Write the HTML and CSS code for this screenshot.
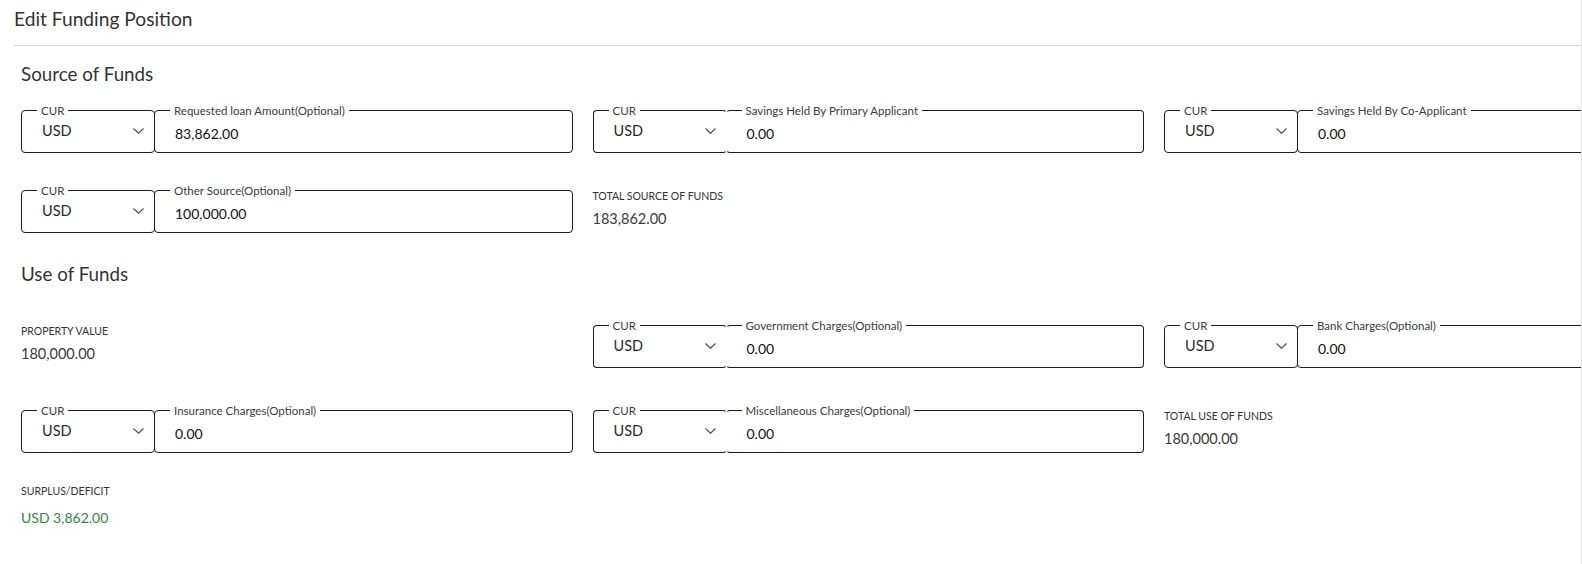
FILE: index.html
```html
<!DOCTYPE html>
<html lang="en">
<head>
<meta charset="utf-8">
<title>Edit Funding Position</title>
<link rel="stylesheet" href="styles.css">
</head>
<body>
<div class="page">
  <header class="page-head"><h1 class="page-title">Edit Funding Position</h1></header>

  <section class="section section-source">
    <h2 class="section-title">Source of Funds</h2>
    <div class="grid grid-source">
      <div class="money">
        <fieldset class="fs fs-cur"><legend>CUR</legend><div class="sel"><span>USD</span><svg class="chev" width="11" height="6" viewBox="0 0 11 6"><path d="M0.5 0.5 L5.5 5.3 L10.5 0.5" fill="none" stroke="#555" stroke-width="1.2"/></svg></div></fieldset>
        <fieldset class="fs fs-amt"><legend>Requested loan Amount(Optional)</legend><div class="inp">83,862.00</div></fieldset>
      </div>
      <div class="money open">
        <fieldset class="fs fs-cur"><legend>CUR</legend><div class="sel"><span>USD</span><svg class="chev" width="11" height="6" viewBox="0 0 11 6"><path d="M0.5 0.5 L5.5 5.3 L10.5 0.5" fill="none" stroke="#555" stroke-width="1.2"/></svg></div></fieldset>
        <fieldset class="fs fs-amt"><legend>Savings Held By Primary Applicant</legend><div class="inp">0.00</div></fieldset>
      </div>
      <div class="money">
        <fieldset class="fs fs-cur"><legend>CUR</legend><div class="sel"><span>USD</span><svg class="chev" width="11" height="6" viewBox="0 0 11 6"><path d="M0.5 0.5 L5.5 5.3 L10.5 0.5" fill="none" stroke="#555" stroke-width="1.2"/></svg></div></fieldset>
        <fieldset class="fs fs-amt"><legend>Savings Held By Co-Applicant</legend><div class="inp">0.00</div></fieldset>
      </div>
      <div class="money">
        <fieldset class="fs fs-cur"><legend>CUR</legend><div class="sel"><span>USD</span><svg class="chev" width="11" height="6" viewBox="0 0 11 6"><path d="M0.5 0.5 L5.5 5.3 L10.5 0.5" fill="none" stroke="#555" stroke-width="1.2"/></svg></div></fieldset>
        <fieldset class="fs fs-amt"><legend>Other Source(Optional)</legend><div class="inp">100,000.00</div></fieldset>
      </div>
      <div class="stat">
        <div class="stat-label">TOTAL SOURCE OF FUNDS</div>
        <div class="stat-value">183,862.00</div>
      </div>
    </div>
  </section>

  <section class="section section-use">
    <h2 class="section-title">Use of Funds</h2>
    <div class="grid grid-use">
      <div class="stat">
        <div class="stat-label">PROPERTY VALUE</div>
        <div class="stat-value">180,000.00</div>
      </div>
      <div class="money open">
        <fieldset class="fs fs-cur"><legend>CUR</legend><div class="sel"><span>USD</span><svg class="chev" width="11" height="6" viewBox="0 0 11 6"><path d="M0.5 0.5 L5.5 5.3 L10.5 0.5" fill="none" stroke="#555" stroke-width="1.2"/></svg></div></fieldset>
        <fieldset class="fs fs-amt"><legend>Government Charges(Optional)</legend><div class="inp">0.00</div></fieldset>
      </div>
      <div class="money">
        <fieldset class="fs fs-cur"><legend>CUR</legend><div class="sel"><span>USD</span><svg class="chev" width="11" height="6" viewBox="0 0 11 6"><path d="M0.5 0.5 L5.5 5.3 L10.5 0.5" fill="none" stroke="#555" stroke-width="1.2"/></svg></div></fieldset>
        <fieldset class="fs fs-amt"><legend>Bank Charges(Optional)</legend><div class="inp">0.00</div></fieldset>
      </div>
      <div class="money">
        <fieldset class="fs fs-cur"><legend>CUR</legend><div class="sel"><span>USD</span><svg class="chev" width="11" height="6" viewBox="0 0 11 6"><path d="M0.5 0.5 L5.5 5.3 L10.5 0.5" fill="none" stroke="#555" stroke-width="1.2"/></svg></div></fieldset>
        <fieldset class="fs fs-amt"><legend>Insurance Charges(Optional)</legend><div class="inp">0.00</div></fieldset>
      </div>
      <div class="money open">
        <fieldset class="fs fs-cur"><legend>CUR</legend><div class="sel"><span>USD</span><svg class="chev" width="11" height="6" viewBox="0 0 11 6"><path d="M0.5 0.5 L5.5 5.3 L10.5 0.5" fill="none" stroke="#555" stroke-width="1.2"/></svg></div></fieldset>
        <fieldset class="fs fs-amt"><legend>Miscellaneous Charges(Optional)</legend><div class="inp">0.00</div></fieldset>
      </div>
      <div class="stat">
        <div class="stat-label">TOTAL USE OF FUNDS</div>
        <div class="stat-value">180,000.00</div>
      </div>
    </div>
    <div class="stat surplus">
      <div class="stat-label">SURPLUS/DEFICIT</div>
      <div class="stat-value surplus-value">USD 3,862.00</div>
    </div>
  </section>
</div>
</body>
</html>
```

FILE: styles.css
```css
html, body {
  margin: 0;
  padding: 0;
  background: #ffffff;
  overflow: hidden;
}

body {
  font-family: "Lato", "Liberation Sans", sans-serif;
  color: #333333;
}

.page {
  width: 1581px;
  height: 564px;
  overflow: hidden;
  border-right: 1px solid #e6e6e6;
}

.page-head {
  margin-left: 14px;
  height: 46px;
  box-sizing: border-box;
  padding-top: 7px;
  border-bottom: 1px solid #d9d9d9;
}

.page-title {
  margin: 0;
  font-size: 19.2px;
  line-height: 24px;
  font-weight: 400;
  color: #333333;
}

.section {
  padding-left: 21px;
}

.section-title {
  margin: 0;
  font-size: 18.8px;
  line-height: 26px;
  font-weight: 400;
  color: #333333;
}

.section-source .section-title {
  margin-top: 15px;
  margin-bottom: 17px;
}

.section-use .section-title {
  margin-top: 28px;
  margin-bottom: 32px;
}

.grid {
  display: grid;
  grid-template-columns: repeat(3, 551.5px);
  column-gap: 20px;
  align-items: start;
}

.grid-source {
  row-gap: 31px;
}

.grid-use {
  row-gap: 36px;
}

.money {
  display: flex;
}

.fs {
  margin: 0;
  min-width: 0;
  border: 1px solid #1c1c1c;
  border-radius: 4px;
  padding: 0 10px 0 15px;
  box-sizing: border-box;
}

.fs legend {
  padding: 0 4px;
  margin: 0;
  font-size: 11.5px;
  line-height: 13px;
  color: #3c3c3c;
  white-space: nowrap;
}

.fs-cur {
  flex: none;
  width: 134px;
}

.fs-amt {
  flex: 1;
  margin-left: -1px;
}

.open .fs-cur {
  border-right-color: transparent;
}

.open .fs-amt {
  border-left-color: transparent;
}

.sel {
  display: flex;
  justify-content: space-between;
  align-items: center;
  height: 35px;
  box-sizing: border-box;
  padding: 4px 0 11px 5px;
  font-size: 14.5px;
  line-height: 20px;
  color: #2a2a2a;
}

.chev {
  display: block;
}

.inp {
  height: 35px;
  box-sizing: border-box;
  padding: 7px 0 0 5px;
  font-size: 14px;
  line-height: 20px;
  color: #111111;
}

.stat {
  padding-top: 3.5px;
}

.stat-label {
  font-size: 10.5px;
  line-height: 16px;
  color: #333333;
  text-transform: uppercase;
}

.stat-value {
  margin-top: 5px;
  font-size: 14.5px;
  line-height: 20px;
  color: #3a3a3a;
}

.surplus {
  margin-top: 26px;
}

.surplus-value {
  margin-top: 9px;
  font-size: 14px;
  color: #2e8b3a;
}
```
